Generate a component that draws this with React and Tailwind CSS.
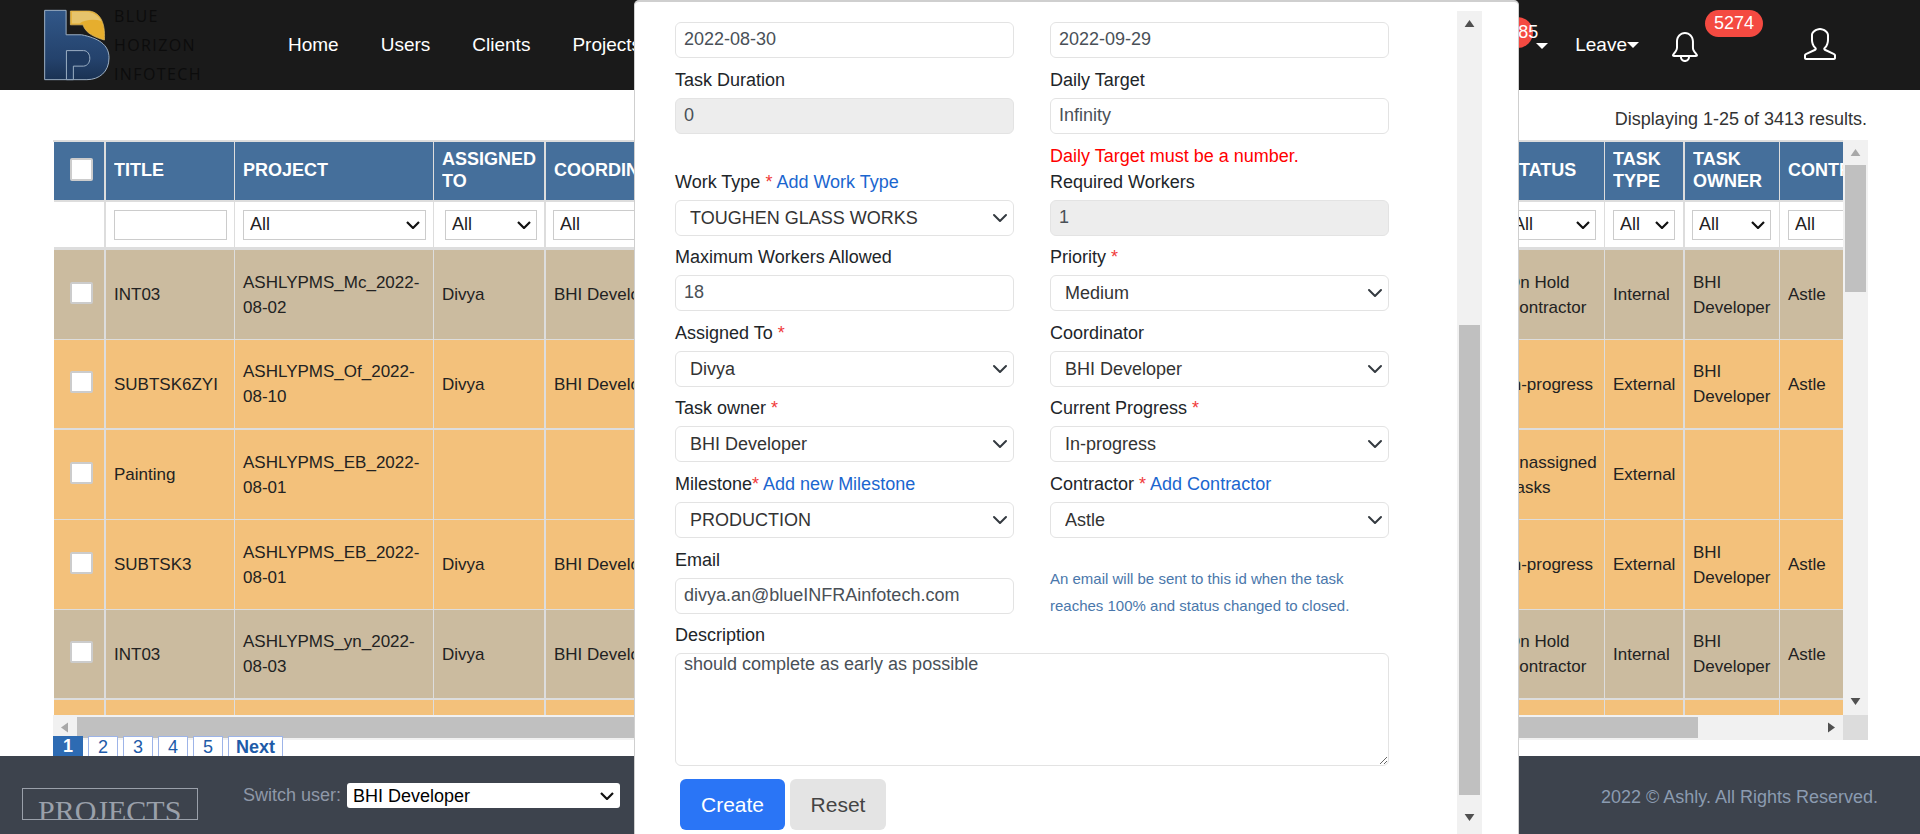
import { SlBell, SlUser } from "react-icons/sl";

const colWidths = [52, 129, 199, 112, 450, 503, 106, 80, 95, 100];

const rows = [
  { bg: "bg-[#cbbb9f]", title: "INT03", project: "ASHLYPMS_Mc_2022-08-02", assigned: "Divya", coord: "BHI Developer", status: "On Hold Contractor", type: "Internal", owner: "BHI Developer", contr: "Astle" },
  { bg: "bg-[#f3c17b]", title: "SUBTSK6ZYI", project: "ASHLYPMS_Of_2022-08-10", assigned: "Divya", coord: "BHI Developer", status: "In-progress", type: "External", owner: "BHI Developer", contr: "Astle", thick: true },
  { bg: "bg-[#f3c17b]", title: "Painting", project: "ASHLYPMS_EB_2022-08-01", assigned: "", coord: "", status: "Unassigned Tasks", type: "External", owner: "", contr: "" },
  { bg: "bg-[#f3c17b]", title: "SUBTSK3", project: "ASHLYPMS_EB_2022-08-01", assigned: "Divya", coord: "BHI Developer", status: "In-progress", type: "External", owner: "BHI Developer", contr: "Astle" },
  { bg: "bg-[#cbbb9f]", title: "INT03", project: "ASHLYPMS_yn_2022-08-03", assigned: "Divya", coord: "BHI Developer", status: "On Hold Contractor", type: "Internal", owner: "BHI Developer", contr: "Astle", thick: true },
  { bg: "bg-[#f3c17b]", title: "", project: "", assigned: "", coord: "", status: "", type: "", owner: "", contr: "" },
];

// right borders differ a bit per column in the screenshot
const cellEdge = ["border-r-2", "border-r", "border-r", "border-r-2", "border-r", "border-r", "border-r", "border-r-2", "border-r", "border-r-0"];

function Logo() {
  return (
    <svg width="68" height="72" viewBox="35 24 206 218" className="shrink-0">
      <defs>
        <linearGradient id="logoBlue" x1="0" y1="0" x2="0" y2="1">
          <stop offset="0" stopColor="#315788" />
          <stop offset="0.7" stopColor="#24426c" />
          <stop offset="1" stopColor="#1a3253" />
        </linearGradient>
      </defs>
      <path
        d="M40 28H105V102H152C200 112 235 130 235 172C235 215 205 238 168 238H40Z"
        fill="url(#logoBlue)"
        stroke="#9db0c4"
        strokeWidth="3"
      />
      <path d="M106 150H158C182 150 184 195 158 197H127V238H106Z" fill="#1f3a60" stroke="#9db0c4" strokeWidth="3" />
      <path d="M118 30H170C205 30 225 62 221 118C195 110 165 100 156 72H118Z" fill="#e6ae2e" stroke="#e8c469" strokeWidth="2" />
      <path d="M122 32H170C190 34 205 46 212 60C190 54 160 56 146 68H122Z" fill="#e6c46c" />
    </svg>
  );
}

function Triangle({ dir, className }) {
  const points = {
    up: "0,10 7,0 14,10",
    down: "0,0 14,0 7,10",
    left: "10,0 10,14 0,7",
    right: "0,0 0,14 10,7",
  };
  const box = dir === "up" || dir === "down" ? "0 0 14 10" : "0 0 10 14";
  const size = dir === "up" || dir === "down" ? "w-[11px] h-[7px]" : "w-[7px] h-[11px]";
  return (
    <svg viewBox={box} className={`${size} ${className}`}>
      <polygon points={points[dir]} fill="currentColor" />
    </svg>
  );
}

function Chevron() {
  return (
    <svg viewBox="0 0 14 8" className="absolute right-[6px] top-1/2 -translate-y-1/2 w-[14px] h-[8px] pointer-events-none">
      <path d="M1 1l6 6 6-6" fill="none" stroke="#111" strokeWidth="2.2" />
    </svg>
  );
}

function Header() {
  return (
    <header className="h-[90px] shrink-0 bg-[#1a1a1a] flex items-center text-white">
      <div className="ml-[43px] flex items-center">
        <Logo />
        <div className="ml-[3px] font-['Open_Sans',sans-serif] text-[16px] leading-[29px] tracking-[1.4px] text-[#0c0c0c]">
          <div>BLUE</div>
          <div>HORIZON</div>
          <div>INFOTECH</div>
        </div>
      </div>
      <nav className="ml-[86px] flex gap-[42px] text-[19px]">
        <span>Home</span>
        <span>Users</span>
        <span>Clients</span>
        <span>Projects</span>
      </nav>
      <div className="ml-auto mr-[84px] flex items-center text-[19px]">
        <div className="relative w-[30px] h-[30px] mr-[3px]">
          <span className="absolute -top-[13px] -left-[31px] w-[31px] h-[31px] rounded-full bg-[#f44a41] flex items-center pl-[6px] text-[18px]">
            285
          </span>
          <span className="absolute top-[13px] left-[3px] border-x-[6px] border-x-transparent border-t-[6px] border-t-white"></span>
        </div>
        <div className="flex items-center ml-[9px]">
          <span>Leave</span>
          <span className="border-x-[6px] border-x-transparent border-t-[6px] border-t-white"></span>
        </div>
        <div className="relative ml-[31px]">
          <SlBell className="w-[30px] h-[30px] mt-[3px]" />
          <span className="absolute -top-[19px] left-[35px] w-[58px] h-[27px] rounded-full bg-[#f44a41] flex items-center justify-center text-[18px]">
            5274
          </span>
        </div>
        <SlUser className="ml-[104px] w-[32px] h-[32px] -mt-[3px]" />
      </div>
    </header>
  );
}

function FilterSelect({ className }) {
  return (
    <div className={`relative ${className}`}>
      <select defaultValue="All" className="block w-full h-[30px] appearance-none pl-[6px] border border-[#ccc] bg-white text-[18px] text-[#222]">
        <option>All</option>
      </select>
      <Chevron />
    </div>
  );
}

function Head({ i, children }) {
  return (
    <th className={`${cellEdge[i]} border-b-2 border-[#ddd] px-[8px] text-left align-middle text-[18px] leading-[22px] font-bold text-white`}>
      {children}
    </th>
  );
}

function Filter({ i, children }) {
  return <td className={`${cellEdge[i]} border-[#ddd] px-[7px] align-middle bg-white`}>{children}</td>;
}

function Cell({ i, thick, first, children }) {
  return (
    <td className={`${cellEdge[i]} ${thick ? "border-b-2" : "border-b"} ${first ? "border-t-[3px] h-[93px]" : "h-[90px]"} border-[#ddd] px-[8px] align-middle text-[17px] leading-[25px] text-[#222]`}>
      {children}
    </td>
  );
}

function DataTable() {
  return (
    <table className="table-fixed border-separate border-spacing-0 w-[1826px]">
      <colgroup>
        {colWidths.map((w, i) => (
          <col key={i} style={{ width: w }} />
        ))}
      </colgroup>
      <thead>
        <tr className="bg-[#456f9b] h-[60px]">
          <th className={`${cellEdge[0]} border-b-2 border-[#ddd]`}>
            <div className="w-[23px] h-[23px] ml-[16px] -mt-[3px] bg-white border-2 border-[#ccc] rounded-[2px]"></div>
          </th>
          {["TITLE", "PROJECT", "ASSIGNED TO", "COORDINATOR", "", "STATUS", "TASK TYPE", "TASK OWNER", "CONTRACTOR"].map((h, i) => (
            <Head key={i} i={i + 1}>
              <span className="block -mt-[3px] overflow-hidden">{h}</span>
            </Head>
          ))}
        </tr>
        <tr className="h-[45px]">
          <Filter i={0}></Filter>
          <Filter i={1}>
            <input className="w-[113px] h-[30px] block ml-[1px] border border-[#ccc] bg-white" />
          </Filter>
          <Filter i={2}><FilterSelect className="w-[183px] ml-[1px]" /></Filter>
          <Filter i={3}><FilterSelect className="w-[92px] ml-[4px]" /></Filter>
          <Filter i={4}><FilterSelect className="w-[160px]" /></Filter>
          <Filter i={5}></Filter>
          <Filter i={6}><FilterSelect className="w-[90px]" /></Filter>
          <Filter i={7}><FilterSelect className="w-[62px] ml-[1px]" /></Filter>
          <Filter i={8}><FilterSelect className="w-[79px]" /></Filter>
          <Filter i={9}><FilterSelect className="w-[79px] ml-[1px]" /></Filter>
        </tr>
      </thead>
      <tbody>
        {rows.map((r, idx) => {
          const shared = { thick: r.thick, first: idx === 0 };
          return (
            <tr key={idx} className={r.bg}>
              <Cell i={0} {...shared}>
                {r.title && <div className="w-[23px] h-[22px] ml-[8px] -mt-[4px] bg-white border-2 border-[#ccc] rounded-[2px]"></div>}
              </Cell>
              <Cell i={1} {...shared}>{r.title}</Cell>
              <Cell i={2} {...shared}>{r.project}</Cell>
              <Cell i={3} {...shared}>{r.assigned}</Cell>
              <Cell i={4} {...shared}>{r.coord}</Cell>
              <Cell i={5} {...shared}></Cell>
              <Cell i={6} {...shared}>{r.status}</Cell>
              <Cell i={7} {...shared}>{r.type}</Cell>
              <Cell i={8} {...shared}>{r.owner}</Cell>
              <Cell i={9} {...shared}>{r.contr}</Cell>
            </tr>
          );
        })}
      </tbody>
    </table>
  );
}

function TablePanel() {
  return (
    <div className="w-[1815px] ml-[53px]">
      <div className="flex h-[575px] border-t-2 border-[#ddd]">
        <div className="w-[1790px] overflow-hidden pl-[1px]">
          <DataTable />
        </div>
        <div className="w-[25px] -mt-[2px] bg-[#f1f1f1] flex flex-col items-center relative">
          <Triangle dir="up" className="mt-[9px] text-[#a8a8a8]" />
          <div className="w-[21px] h-[127px] mt-[9px] bg-[#c0c0c0]"></div>
          <Triangle dir="down" className="mt-auto mb-[10px] text-[#505050]" />
        </div>
      </div>
      <div className="flex h-[25px]">
        <div className="w-[1790px] bg-[#f1f1f1] flex items-center">
          <Triangle dir="left" className="ml-[8px] text-[#a8a8a8]" />
          <div className="ml-[9px] w-[1621px] h-[21px] bg-[#c0c0c0]"></div>
          <Triangle dir="right" className="ml-auto mr-[8px] text-[#505050]" />
        </div>
        <div className="w-[25px] bg-[#dcdcdc]"></div>
      </div>
      <div className="relative -mt-[4px] flex gap-[5px] text-[18px] leading-[20px] h-[20px] text-[#1e5ba8]">
        <span className="w-[30px] bg-[#2d6bb3] text-white font-bold text-center">1</span>
        {["2", "3", "4", "5"].map((n) => (
          <span key={n} className="w-[30px] bg-white border border-b-0 border-[#9db4e8] text-center">{n}</span>
        ))}
        <span className="w-[55px] bg-white border border-b-0 border-[#9db4e8] font-bold text-center">Next</span>
      </div>
    </div>
  );
}

function Req({ tight }) {
  return <span className="text-[#f03a3a]">{tight ? "*" : " *"}</span>;
}

function Link({ children }) {
  return <span className="text-[#1b66cf]"> {children}</span>;
}

const boxClass = "block w-full h-[36px] border border-[#e3e3e3] rounded-[6px] text-[18px]";

function Label({ children }) {
  return <div className="h-[26px] mb-[4px] text-[18px] leading-[25px] text-[#212529] whitespace-nowrap">{children}</div>;
}

function TextBox({ value, disabled }) {
  return (
    <input
      readOnly
      defaultValue={value}
      className={`${boxClass} px-[8px] pb-[1px] text-[#495057] ${disabled ? "bg-[#ededed]" : "bg-white"}`}
    />
  );
}

function SelectBox({ value }) {
  return (
    <div className="relative">
      <select defaultValue={value} className={`${boxClass} appearance-none pl-[14px] pt-[1px] bg-white text-[#333]`}>
        <option>{value}</option>
      </select>
      <svg viewBox="0 0 16 16" className="absolute right-[6px] top-[10px] w-[16px] h-[16px] pointer-events-none">
        <path d="m2 5 6 6 6-6" fill="none" stroke="#343a40" strokeWidth="2" strokeLinecap="round" strokeLinejoin="round" />
      </svg>
    </div>
  );
}

function Field({ label, children, className = "pb-[9.6px]" }) {
  return (
    <div className={className}>
      {label && <Label>{label}</Label>}
      {children}
    </div>
  );
}

function TaskModal() {
  return (
    <div className="absolute left-[634px] top-0 w-[885px] h-[834px] bg-white border-x border-t-2 border-[#cfcfcf] rounded-t-[5px] flex overflow-hidden">
      <div className="w-[822px] shrink-0 pl-[40px] pr-[68px] pt-[20px]">
        <div className="grid grid-cols-[339px_339px] gap-x-[36px]">
          <Field><TextBox value="2022-08-30" /></Field>
          <Field><TextBox value="2022-09-29" /></Field>

          <Field label="Task Duration"><TextBox value="0" disabled /></Field>
          <Field label="Daily Target" className="pb-0">
            <TextBox value="Infinity" />
            <div className="mt-[9px] h-[27px] text-[18px] leading-[27px] text-[#ff0000] whitespace-nowrap">Daily Target must be a number.</div>
          </Field>

          <Field label={<>Work Type<Req /><Link>Add Work Type</Link></>}><SelectBox value="TOUGHEN GLASS WORKS" /></Field>
          <Field label="Required Workers"><TextBox value="1" disabled /></Field>

          <Field label="Maximum Workers Allowed"><TextBox value="18" /></Field>
          <Field label={<>Priority<Req /></>}><SelectBox value="Medium" /></Field>

          <Field label={<>Assigned To<Req /></>}><SelectBox value="Divya" /></Field>
          <Field label="Coordinator"><SelectBox value="BHI Developer" /></Field>

          <Field label={<>Task owner<Req /></>}><SelectBox value="BHI Developer" /></Field>
          <Field label={<>Current Progress<Req /></>}><SelectBox value="In-progress" /></Field>

          <Field label={<>Milestone<Req tight /><Link>Add new Milestone</Link></>}><SelectBox value="PRODUCTION" /></Field>
          <Field label={<>Contractor<Req /><Link>Add Contractor</Link></>}><SelectBox value="Astle" /></Field>

          <Field label="Email"><TextBox value="divya.an@blueINFRAinfotech.com" /></Field>
          <div className="pt-[17px] text-[15px] leading-[27px] text-[#4a77ab] whitespace-nowrap">
            <div>An email will be sent to this id when the task</div>
            <div>reaches 100% and status changed to closed.</div>
          </div>

          <div className="col-span-2">
            <div className="h-[26px] mb-[4px] text-[18px] leading-[25px] text-[#212529]">Description</div>
            <textarea
              readOnly
              defaultValue="should complete as early as possible"
              className="block w-full h-[113px] border border-[#e3e3e3] rounded-[6px] px-[8px] text-[18px] leading-[20px] text-[#495057]"
            />
          </div>
        </div>
        <div className="mt-[13px] ml-[5px] flex gap-[5px] text-[21px]">
          <button className="w-[105px] h-[51px] rounded-[6px] bg-[#2a75f6] text-white">Create</button>
          <button className="w-[96px] h-[51px] rounded-[6px] bg-[#e4e4e4] text-[#444]">Reset</button>
        </div>
      </div>
      <div className="w-[25px] mt-[9px] bg-[#f1f1f1] flex flex-col items-center">
        <Triangle dir="up" className="mt-[9px] text-[#505050]" />
        <div className="w-[21px] h-[470px] mt-[298px] bg-[#c0c0c0]"></div>
        <Triangle dir="down" className="mt-[19px] text-[#505050]" />
      </div>
    </div>
  );
}

function Footer() {
  return (
    <footer className="h-[78px] shrink-0 bg-[#3d434d] flex items-start text-[18px]">
      <div className="ml-[22px] mt-[32px] w-[176px] h-[32px] border border-[#9aa0aa] overflow-hidden pl-[15px] font-['Liberation_Serif',serif] text-[30px] leading-[43px] text-[#9aa0aa] whitespace-nowrap">
        PROJECTS
      </div>
      <div className="ml-[45px] mt-[26px] flex items-center">
        <span className="text-[#8f98a8] mr-[6px]">Switch user:</span>
        <div className="relative w-[273px]">
          <select defaultValue="BHI Developer" className="block w-full h-[25px] appearance-none pl-[6px] bg-white rounded-[3px] text-black">
            <option>BHI Developer</option>
          </select>
          <Chevron />
        </div>
      </div>
      <div className="ml-auto mr-[42px] mt-[28px] text-[#8b9bb0]">2022 © Ashly. All Rights Reserved.</div>
    </footer>
  );
}

export default function App() {
  return (
    <div className="relative h-[834px] w-[1920px] overflow-hidden flex flex-col bg-white font-['Liberation_Sans',sans-serif]">
      <Header />
      <main className="flex-1">
        <div className="h-[50px] pt-[16px] pr-[53px] text-right text-[18px] leading-[26px] text-[#333]">
          Displaying 1-25 of 3413 results.
        </div>
        <TablePanel />
      </main>
      <Footer />
      <TaskModal />
    </div>
  );
}
